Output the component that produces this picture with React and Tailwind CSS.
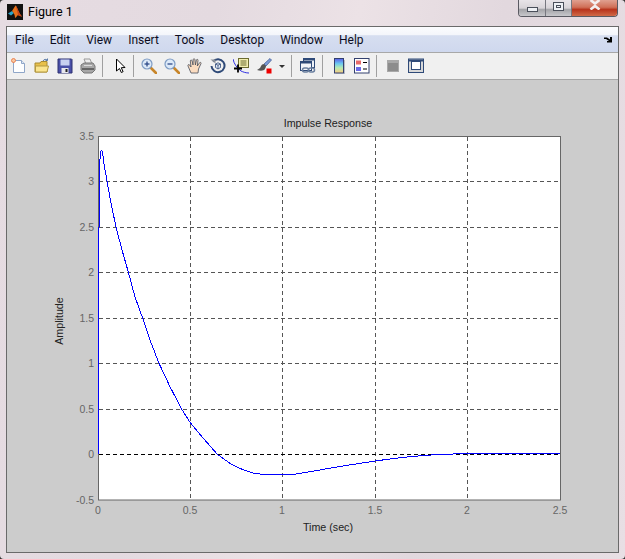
import React from "react";

const curve = [
  [99.5, 227], [99.5, 166], [100.5, 152], [101.5, 150.5], [102.5, 152], [104, 164], [107, 181], [111, 203],
  [116, 227], [122, 250], [128.3, 272], [135, 297], [143.3, 320], [150, 340], [159, 363.3], [170, 386.7], [181.7, 409.3],
  [190.7, 423.3], [203.3, 438.3], [217.3, 454.3], [230, 463.3], [240, 468.5], [253, 473], [263, 474.5], [293, 474.5], [316.7, 470.5],
  [343, 466], [375, 461], [400, 457.7], [423, 455.5], [440, 454.5], [466.7, 453.5], [560, 453.5],
];

const xTicks = [
  ["0", 98], ["0.5", 190], ["1", 282], ["1.5", 375], ["2", 467], ["2.5", 560],
];
const yTicks = [
  ["3.5", 136], ["3", 181], ["2.5", 227], ["2", 272], ["1.5", 318], ["1", 363], ["0.5", 409], ["0", 454], ["-0.5", 500],
];

function Plot() {
  return (
    <svg width="611" height="472" viewBox="7 80 611 472" className="block" fontFamily="'Liberation Sans', sans-serif" fontSize="10.5">
      <rect x="98.5" y="136.5" width="462" height="363.5" fill="#fff" />
      {xTicks.slice(1, 5).map(([l, x]) => (
        <line key={l} x1={x + 0.5} x2={x + 0.5} y1="137" y2="500" stroke="#555" strokeDasharray="4 3" />
      ))}
      {yTicks.slice(1, 7).map(([l, y]) => (
        <line key={l} x1="99" x2="560" y1={y + 0.5} y2={y + 0.5} stroke="#555" strokeDasharray="4 3" />
      ))}
      <line x1="99" x2="560" y1="454.5" y2="454.5" stroke="#000" strokeDasharray="4 3" />
      <rect x="98.5" y="136.5" width="462" height="363.5" fill="none" stroke="#666" />
      <line x1="98.5" x2="98.5" y1="227" y2="454" stroke="#0000ff" />
      <polyline points={curve.map((p) => p.join(",")).join(" ")} fill="none" stroke="#0000ff" strokeWidth="1" shapeRendering="crispEdges" />
      {xTicks.map(([l, x]) => (
        <text key={l} x={x} y="514" textAnchor="middle" fill="#666">{l}</text>
      ))}
      {yTicks.map(([l, y]) => (
        <text key={l} x="94" y={y + 4} textAnchor="end" fill="#666">{l}</text>
      ))}
      <text x="328" y="127" textAnchor="middle" fill="#222" fontSize="10.7">Impulse Response</text>
      <text x="328" y="531" textAnchor="middle" fill="#222" fontSize="10.7">Time (sec)</text>
      <text transform="translate(63 321) rotate(-90)" textAnchor="middle" fill="#222" fontSize="10.7">Amplitude</text>
    </svg>
  );
}

function Logo() {
  return (
    <svg width="16" height="16" viewBox="0 0 16 16" className="block">
      <rect width="16" height="16" fill="#111" />
      <path d="M1 9.500 5 7l2 2-3 2.500z" fill="#2aa3c9" />
      <path d="M5 7 8.500 1.500C10 2 11.500 9 15 12.500c-2-.5-3-1-4-1.500-1 1-2 2.500-3 3C8 11 7 9 5 7z" fill="#e8721c" />
      <path d="M8.500 1.500C10 2 11.500 9 15 12.500c-2-.5-3-1-4-1.500C10.500 8 9.500 4 8.500 1.500z" fill="#c8431a" />
    </svg>
  );
}

function IconNew() {
  return (
    <svg width="16" height="16" viewBox="0 0 16 16">
      <path d="M2.500 2.500h8l3 3v9h-11z" fill="#fdfeff" stroke="#8fa6c8" />
      <path d="M10.500 2.500v3h3" fill="#dfe8f5" stroke="#8fa6c8" />
      <circle cx="2.500" cy="2.500" r="2" fill="#f9c9a0" stroke="#e8703a" strokeWidth="0.8" />
    </svg>
  );
}

function IconOpen() {
  return (
    <svg width="16" height="16" viewBox="0 0 16 16">
      <path d="M1 5h5l1-1.500h6V14H1z" fill="#e8c04a" stroke="#a88a30" />
      <path d="M1.500 8h13L13 14H1.500z" fill="#fbe58e" stroke="#b59a40" />
      <path d="M9 3c1-2 3-2 4.500-1M13.500 .5v2h-2" fill="none" stroke="#5a7aa8" />
    </svg>
  );
}

function IconSave() {
  return (
    <svg width="16" height="16" viewBox="0 0 16 16">
      <path d="M1 1h13.500l.5 .5V15H1z" fill="#4a50a8" stroke="#2c3070" />
      <rect x="3.500" y="1.500" width="9" height="6" fill="#c8d0f0" />
      <rect x="4.500" y="10" width="7" height="5" fill="#e8e8ee" />
      <rect x="8.500" y="11" width="2" height="3" fill="#222" />
    </svg>
  );
}

function IconPrint() {
  return (
    <svg width="16" height="16" viewBox="0 0 16 16">
      <path d="M4 1h6l2 5H6z" fill="#eee" stroke="#999" />
      <path d="M1 7l3-2h9l2 3v4l-3 3H4l-3-3z" fill="#a8a8a8" stroke="#777" />
      <path d="M2 10h12v2H2z" fill="#666" />
      <path d="M4 7.500h8" stroke="#ddd" />
    </svg>
  );
}

function IconArrow() {
  return (
    <svg width="16" height="16" viewBox="0 0 16 16">
      <path d="M4.500 1v12l3-2.500 1.800 4 1.800-.8-1.800-4 3.700-.2z" fill="#fff" stroke="#000" />
    </svg>
  );
}

function IconZoom({ plus }) {
  return (
    <svg width="16" height="16" viewBox="0 0 16 16">
      <path d="M9.500 9.500 15 15" stroke="#c8862a" strokeWidth="2.600" strokeLinecap="round" />
      <circle cx="6" cy="6" r="5" fill="#dce9f8" stroke="#7e9cc4" strokeWidth="1.200" />
      <path d="M3.500 6h5" stroke="#2c4a88" strokeWidth="1.300" />
      {plus && <path d="M6 3.500v5" stroke="#2c4a88" strokeWidth="1.300" />}
    </svg>
  );
}

function IconHand() {
  return (
    <svg width="16" height="16" viewBox="0 0 16 16">
      <path d="M4 15 1 8c-.5-1.500 1-2 1.700-1L4 9 3.300 3c0-1.300 1.600-1.300 1.800 0L6 7l.2-5.500c0-1 1.700-1 1.700 0L8.400 7l1-5c.3-1 1.700-.8 1.600.3L10.300 8l2.300-3.300c.7-.8 1.900 0 1.400.9L11.500 11 11 15z" fill="#fbdcc0" stroke="#4a4f5a" strokeWidth="0.8" />
    </svg>
  );
}

function IconRotate() {
  return (
    <svg width="16" height="16" viewBox="0 0 16 16">
      <path d="M3 3.500A6.500 6.500 0 1 1 1.500 8" fill="none" stroke="#2f4a78" strokeWidth="2" />
      <path d="M.5 1.500h5v4z" fill="#8a8f98" />
      <path d="M5.500 6 8 4.800 10.500 6v3.500L8 11 5.500 9.500zM5.500 6 8 7.200l2.500-1.200M8 7.200V11" fill="#dfe8f5" stroke="#2f4a78" strokeWidth="0.8" />
    </svg>
  );
}

function IconTip() {
  return (
    <svg width="16" height="16" viewBox="0 0 16 16">
      <path d="M0 1c1 5 4 9 8 12 2 1 5 2 8 2" fill="none" stroke="#1a1ae0" strokeWidth="0.9" />
      <rect x="5.500" y=".5" width="10" height="9" fill="#f2eeb0" stroke="#6b6b30" />
      <path d="M7.500 3h6M7.500 5h6M7.500 7h6" stroke="#6b6b30" />
      <path d="M5 6.500v8M1 10.500h8" stroke="#000" strokeWidth="1.800" />
    </svg>
  );
}

function IconBrush() {
  return (
    <svg width="16" height="16" viewBox="0 0 16 16">
      <path d="M8 6 14 .5 15.500 2 10 8z" fill="#7e9cd8" stroke="#33508c" strokeWidth="0.7" />
      <path d="M8 6c-3 0-3 3-4 4-.7.700-3 2-3 2 3 1 7 1 8-1 .7-1.500 1-2 1-3z" fill="#555" />
      <rect x="10.500" y="10.500" width="5" height="5" fill="#ee0000" />
    </svg>
  );
}

function IconLink() {
  return (
    <svg width="16" height="16" viewBox="0 0 16 16">
      <rect x="3.500" y=".5" width="11" height="9" fill="#eef2f8" stroke="#2f4a78" />
      <rect x="3.500" y=".5" width="11" height="2" fill="#2f4a78" />
      <rect x=".5" y="3.500" width="11" height="9" fill="#f4f6fa" stroke="#2f4a78" />
      <rect x=".5" y="3.500" width="11" height="2" fill="#2f4a78" />
      <rect x="2.500" y="10" width="6" height="4" rx="2" fill="none" stroke="#6a7f9f" strokeWidth="1.500" />
      <rect x="8.500" y="10" width="6" height="4" rx="2" fill="none" stroke="#6a7f9f" strokeWidth="1.500" />
    </svg>
  );
}

function IconColorbar() {
  return (
    <svg width="16" height="16" viewBox="0 0 16 16">
      <defs>
        <linearGradient id="cb" x1="0" y1="0" x2="0" y2="1">
          <stop offset="0" stopColor="#5a5ae8" />
          <stop offset="0.35" stopColor="#6ac8f0" />
          <stop offset="0.65" stopColor="#b8ecb0" />
          <stop offset="1" stopColor="#f8c880" />
        </linearGradient>
      </defs>
      <path d="M13.500 2v14H5" fill="none" stroke="#b8bcc4" />
      <rect x="3.500" y=".5" width="9" height="14.500" fill="url(#cb)" stroke="#33406e" />
    </svg>
  );
}

function IconLegend() {
  return (
    <svg width="16" height="16" viewBox="0 0 16 16">
      <rect x=".5" y=".5" width="14.500" height="14.500" fill="#fff" stroke="#33406e" />
      <rect x="2" y="2.500" width="5" height="4" fill="#e86a6a" />
      <rect x="2" y="9" width="5" height="4" fill="#6a6ae8" />
      <path d="M9 4.500h4M9 11h4" stroke="#000" />
    </svg>
  );
}

function IconPlotHide() {
  return (
    <svg width="16" height="16" viewBox="0 0 16 16">
      <rect x="2.500" y="2.500" width="11" height="11" fill="#8c8c8c" stroke="#a8a8a8" />
      <rect x="3" y="3" width="10" height="2" fill="#a8a8a8" />
    </svg>
  );
}

function IconPlotShow() {
  return (
    <svg width="16" height="16" viewBox="0 0 16 16">
      <rect x=".5" y="1" width="15" height="13.500" fill="#d8d8d8" stroke="#2f4a78" />
      <rect x="1" y="1.500" width="14" height="2" fill="#2f4a78" />
      <rect x="3.500" y="3.500" width="9" height="8" fill="#fff" stroke="#2f4a78" />
    </svg>
  );
}

function Btn({ children }) {
  return <div className="w-[23px] h-[16px] flex items-center justify-center shrink-0">{children}</div>;
}

function Sep({ className }) {
  return <div className={"w-px h-[22px] bg-[#a0a0a0] shrink-0 " + className} />;
}

const menus = ["File", "Edit", "View", "Insert", "Tools", "Desktop", "Window", "Help"];

export default function App() {
  return (
    <div className="w-[625px] h-[559px] bg-[#333] overflow-hidden">
      <div className="w-full h-full flex flex-col rounded-[4px] bg-[linear-gradient(100deg,#e6dce2_0%,#e4dae0_30%,#ece2e6_50%,#e2d8de_70%,#e8dfe4_100%)] font-['Roboto',sans-serif]">
        <div className="h-[26px] shrink-0 flex items-start justify-between pr-[7px]">
          <div className="flex items-center gap-[5px] pl-[7px] pt-[4px]">
            <Logo />
            <span className="text-[12.5px] leading-[16px] text-black">Figure 1</span>
          </div>
          <div className="flex h-[17px] border border-t-0 border-[#5a5a62] rounded-b-[4px] overflow-hidden">
            <div className="w-[27px] flex items-center justify-center bg-[linear-gradient(#e8e4e8,#d8d4d8_50%,#a4a4a8_60%,#c8c8cc)] border-r border-[#77777f]">
              <div className="w-[11px] h-[5px] mt-[3px] bg-[#eef0f4] border border-[#4a4f5a]" />
            </div>
            <div className="w-[26px] flex items-center justify-center bg-[linear-gradient(#e8e4e8,#d8d4d8_50%,#a4a4a8_60%,#c8c8cc)] border-r border-[#77777f]">
              <div className="w-[11px] h-[9px] mb-[3px] border border-[#4a4f5a] bg-[#eef0f4] flex items-center justify-center">
                <div className="w-[5px] h-[3px] border border-[#4a4f5a]" />
              </div>
            </div>
            <div className="w-[45px] flex items-start justify-center bg-[linear-gradient(#e0a090,#d07058_45%,#b8341c_60%,#d06a48)]">
              <svg width="12" height="10" viewBox="0 0 12 10" className="block">
                <path d="M1.500 0 6 3.500 10.500 0M1.500 9.500 6 6l4.500 3.500" fill="none" stroke="#f4f0f0" strokeWidth="2.600" />
              </svg>
            </div>
          </div>
        </div>
        <div className="flex-1 mx-[6px] mb-[6px] border border-[#6a6a6a] flex flex-col min-h-0 w-[613px]">
          <div className="h-[26px] shrink-0 flex items-center justify-between pl-[8px] pr-[6px] border-b border-[#a8a8a8] bg-[linear-gradient(#fbfcfe_0%,#f4f6fb_30%,#d6def0_35%,#cfd8ee_100%)]">
            <div className="flex gap-[16px] text-[12px] text-[#0c0c20]">
              {menus.map((m) => (
                <span key={m}>{m}</span>
              ))}
            </div>
            <svg width="8" height="6" viewBox="0 0 8 6" className="block">
              <path d="M0 .5h3l3 2V0l2 0v5.500H3l0-1.500h2L2 2H0z" fill="#000" />
            </svg>
          </div>
          <div className="h-[27px] shrink-0 flex items-center border-b border-[#a8a8a8] bg-[#f0f0f0]">
            <Btn><IconNew /></Btn>
            <Btn><IconOpen /></Btn>
            <Btn><IconSave /></Btn>
            <Btn><IconPrint /></Btn>
            <Sep className="ml-[3px] mr-[5px]" />
            <Btn><IconArrow /></Btn>
            <Sep className="ml-[2px] mr-[3px]" />
            <Btn><IconZoom plus /></Btn>
            <Btn><IconZoom /></Btn>
            <Btn><IconHand /></Btn>
            <Btn><IconRotate /></Btn>
            <Btn><IconTip /></Btn>
            <Btn><IconBrush /></Btn>
            <div className="w-[14px] flex justify-center shrink-0">
              <div className="w-0 h-0 border-x-[3px] border-x-transparent border-t-[3px] border-t-[#333]" />
            </div>
            <Sep className="ml-[2px] mr-[4px]" />
            <Btn><IconLink /></Btn>
            <Sep className="ml-[3px] mr-[4px]" />
            <Btn><IconColorbar /></Btn>
            <Btn><IconLegend /></Btn>
            <Sep className="ml-[3px] mr-[4px]" />
            <Btn><IconPlotHide /></Btn>
            <Btn><IconPlotShow /></Btn>
          </div>
          <div className="flex-1 min-h-0 bg-[#cccccc] overflow-hidden">
            <Plot />
          </div>
        </div>
      </div>
    </div>
  );
}
